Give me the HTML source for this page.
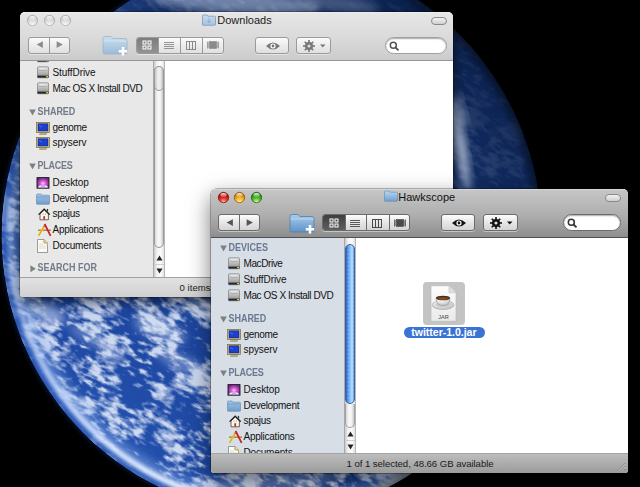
<!DOCTYPE html>
<html><head><meta charset="utf-8"><style>
*{margin:0;padding:0;box-sizing:border-box}
html,body{width:640px;height:487px;overflow:hidden;background:#000;font-family:"Liberation Sans",sans-serif;}
.a{position:absolute}
.win{position:absolute;overflow:hidden}
.t{position:absolute;white-space:nowrap;line-height:1;color:#000}
</style></head>
<body>
<svg class="a" style="left:0;top:0" width="640" height="487" viewBox="0 0 640 487">
<defs>
<clipPath id="cA"><circle cx="281.3" cy="235.5" r="279.5"/></clipPath>
<clipPath id="cB2"><circle cx="257" cy="234.5" r="284.5"/></clipPath>
<clipPath id="cB" clip-path="url(#cA)"><circle cx="257" cy="234.5" r="284.5"/></clipPath>
<radialGradient id="gBase" cx="60" cy="480" r="600" gradientUnits="userSpaceOnUse">
 <stop offset="0" stop-color="#2858b8"/>
 <stop offset="0.3" stop-color="#1c46a0"/>
 <stop offset="0.5" stop-color="#183d88"/>
 <stop offset="0.7" stop-color="#183a80"/>
 <stop offset="0.85" stop-color="#112c62"/>
 <stop offset="1" stop-color="#0b214e"/>
</radialGradient>
<radialGradient id="gShade" cx="257" cy="234.5" r="284.5" gradientUnits="userSpaceOnUse">
 <stop offset="0.96" stop-color="#000" stop-opacity="0"/>
 <stop offset="1" stop-color="#000" stop-opacity="0.45"/>
</radialGradient>
<filter id="fCloud" x="-300" y="-300" width="1300" height="1100" filterUnits="userSpaceOnUse">
 <feTurbulence type="fractalNoise" baseFrequency="0.09 0.2" numOctaves="3" seed="5" result="n1"/>
 <feTurbulence type="fractalNoise" baseFrequency="0.025 0.03" numOctaves="2" seed="21" result="n2"/>
 <feComposite in="n1" in2="n2" operator="arithmetic" k1="0" k2="0.55" k3="0.6" k4="-0.05" result="n"/>
 <feColorMatrix in="n" type="matrix" values="0 0 0 0 0.88  0 0 0 0 0.92  0 0 0 0 1  5.5 0 0 0 -2.25" result="c"/>
 <feGaussianBlur in="c" stdDeviation="0.5" result="cb"/>
 <feComposite in="cb" in2="SourceGraphic" operator="in"/>
</filter>
<radialGradient id="gCloudMask" cx="60" cy="480" r="600" gradientUnits="userSpaceOnUse">
 <stop offset="0" stop-color="#fff" stop-opacity="0.85"/>
 <stop offset="0.45" stop-color="#fff" stop-opacity="0.8"/>
 <stop offset="0.65" stop-color="#fff" stop-opacity="0.5"/>
 <stop offset="0.8" stop-color="#fff" stop-opacity="0.15"/>
 <stop offset="1" stop-color="#fff" stop-opacity="0.04"/>
</radialGradient>
<linearGradient id="gLimb" x1="110" y1="480" x2="10" y2="140" gradientUnits="userSpaceOnUse">
 <stop offset="0" stop-color="#e4eeff" stop-opacity="1"/>
 <stop offset="0.3" stop-color="#d0e0ff" stop-opacity="0.85"/>
 <stop offset="0.7" stop-color="#a8c0f0" stop-opacity="0.4"/>
 <stop offset="1" stop-color="#90a8d8" stop-opacity="0.2"/>
</linearGradient>
<linearGradient id="gHaze" x1="0" y1="487" x2="260" y2="0" gradientUnits="userSpaceOnUse">
 <stop offset="0" stop-color="#9cc0f8" stop-opacity="0.8"/>
 <stop offset="0.6" stop-color="#7aa0e0" stop-opacity="0.55"/>
 <stop offset="1" stop-color="#5a78b0" stop-opacity="0.25"/>
</linearGradient>
<mask id="mCloud" maskUnits="userSpaceOnUse" x="0" y="0" width="640" height="487"><rect width="640" height="487" fill="url(#gCloudMask)"/></mask>
<linearGradient id="gLimbMaskG" x1="150" y1="380" x2="400" y2="130" gradientUnits="userSpaceOnUse"><stop offset="0" stop-color="#fff"/><stop offset="1" stop-color="#000"/></linearGradient>
<mask id="mLimb" maskUnits="userSpaceOnUse" x="0" y="0" width="640" height="487"><rect width="640" height="487" fill="url(#gLimbMaskG)"/></mask>
<filter id="fBlur" x="-10%" y="-10%" width="120%" height="120%"><feGaussianBlur stdDeviation="2"/></filter>
<filter id="fBlur2" x="-10%" y="-10%" width="120%" height="120%"><feGaussianBlur stdDeviation="4"/></filter>
<filter id="fBlur3" x="-50%" y="-50%" width="200%" height="200%"><feGaussianBlur stdDeviation="4"/></filter>
</defs>
<circle cx="281.3" cy="235.5" r="279.8" fill="none" stroke="#1c3c8c" stroke-width="2.2" opacity="0.55" filter="url(#fBlur)" clip-path="url(#cB2)"/>
<g clip-path="url(#cB)">
<rect width="640" height="487" fill="url(#gBase)"/>
<g mask="url(#mCloud)"><g transform="rotate(28 200 400)"><rect x="-300" y="-300" width="1300" height="1100" fill="#fff" filter="url(#fCloud)"/></g></g>
<ellipse cx="45" cy="312" rx="22" ry="9" transform="rotate(25 45 312)" fill="#dfe8fa" opacity="0.55" filter="url(#fBlur3)"/>
<ellipse cx="95" cy="340" rx="30" ry="6" transform="rotate(28 95 340)" fill="#dfe8fa" opacity="0.35" filter="url(#fBlur3)"/>
<ellipse cx="160" cy="330" rx="28" ry="10" transform="rotate(20 160 330)" fill="#dfe8fa" opacity="0.4" filter="url(#fBlur3)"/>
<ellipse cx="180" cy="362" rx="26" ry="8" transform="rotate(25 180 362)" fill="#dfe8fa" opacity="0.35" filter="url(#fBlur3)"/>
<ellipse cx="200" cy="305" rx="16" ry="8" transform="rotate(0 200 305)" fill="#dfe8fa" opacity="0.35" filter="url(#fBlur3)"/>
<ellipse cx="460" cy="145" rx="5" ry="48" transform="rotate(-10 460 145)" fill="#dfe8fa" opacity="0.75" filter="url(#fBlur3)"/>
<ellipse cx="462" cy="110" rx="3" ry="20" transform="rotate(-15 462 110)" fill="#dfe8fa" opacity="0.4" filter="url(#fBlur3)"/>
<ellipse cx="235" cy="2" rx="85" ry="12" transform="rotate(4 235 2)" fill="#dfe8fa" opacity="0.45" filter="url(#fBlur3)"/>
<ellipse cx="340" cy="4" rx="40" ry="8" transform="rotate(8 340 4)" fill="#dfe8fa" opacity="0.25" filter="url(#fBlur3)"/>
<ellipse cx="270" cy="482" rx="70" ry="9" transform="rotate(-5 270 482)" fill="#dfe8fa" opacity="0.3" filter="url(#fBlur3)"/>
<g mask="url(#mLimb)">
<circle cx="281.3" cy="235.5" r="268" fill="none" stroke="url(#gHaze)" stroke-width="18" opacity="0.55" filter="url(#fBlur2)"/>
<circle cx="281.3" cy="235.5" r="271.8" fill="none" stroke="url(#gLimb)" stroke-width="7.5" filter="url(#fBlur)"/>
<circle cx="281.3" cy="235.5" r="277.5" fill="none" stroke="#2a58b8" stroke-width="5" opacity="0.95" filter="url(#fBlur)"/>
</g>
<rect width="640" height="487" fill="url(#gShade)"/>
</g>
</svg>
<div class="a" style="left:20px;top:12px;width:433px;height:284.5px;border-radius:5px 5px 3px 3px;box-shadow:0 5px 14px rgba(0,0,0,0.6), 0 0 0 0.5px rgba(0,0,0,0.45)"></div><div class="win" style="left:20px;top:12px;width:433px;height:284.5px;border-radius:5px 5px 3px 3px;background:#fff"><div class="a" style="left:0;top:0;width:433px;height:49px;background:linear-gradient(#efefef 0px,#e6e6e6 2px,#d9d9d9 28px,#cbcbcb 48px);border-bottom:1px solid #969696"></div><div class="a" style="left:0;top:49px;width:132.5px;height:216.5px;background:#e8e8e8;overflow:hidden"><svg class="a" style="left:8.6px;top:-23.0px" width="7" height="7"><path d="M0.2 0.6H6.8L3.5 6.4Z" fill="#808080"/></svg><div class="t" style="left:17.6px;top:-24.02px;font-size:9px;font-weight:bold;color:#737b88;letter-spacing:-0.03px;transform:scaleY(1.14);transform-origin:0 90%">DEVICES</div><svg class="a" style="left:16.8px;top:-10.899999999999988px" width="12" height="13" viewBox="0 0 12 13"><defs><linearGradient id="dg" x1="0" y1="0" x2="0" y2="1"><stop offset="0" stop-color="#e6e6e6"/><stop offset="0.6" stop-color="#b0b0b0"/><stop offset="1" stop-color="#8a8a8a"/></linearGradient></defs><rect x="0.5" y="0.8" width="11" height="11" rx="1" fill="url(#dg)" stroke="#7a7a7a" stroke-width="0.7"/><path d="M3 3H9" stroke="#fff" stroke-width="0.8" opacity="0.8"/><path d="M2 4.3H10" stroke="#8a8a8a" stroke-width="0.5"/><rect x="0.5" y="9.6" width="11" height="2" fill="#2a2a2a"/><rect x="9.3" y="10" width="1.6" height="1.4" fill="#f4e04a"/></svg><div class="t" style="left:32.5px;top:-8.56px;font-size:10px;font-weight:normal;color:#111;letter-spacing:-0.4px;">MacDrive</div><svg class="a" style="left:16.8px;top:4.850000000000012px" width="12" height="13" viewBox="0 0 12 13"><defs><linearGradient id="dg" x1="0" y1="0" x2="0" y2="1"><stop offset="0" stop-color="#e6e6e6"/><stop offset="0.6" stop-color="#b0b0b0"/><stop offset="1" stop-color="#8a8a8a"/></linearGradient></defs><rect x="0.5" y="0.8" width="11" height="11" rx="1" fill="url(#dg)" stroke="#7a7a7a" stroke-width="0.7"/><path d="M3 3H9" stroke="#fff" stroke-width="0.8" opacity="0.8"/><path d="M2 4.3H10" stroke="#8a8a8a" stroke-width="0.5"/><rect x="0.5" y="9.6" width="11" height="2" fill="#2a2a2a"/><rect x="9.3" y="10" width="1.6" height="1.4" fill="#f4e04a"/></svg><div class="t" style="left:32.5px;top:7.19px;font-size:10px;font-weight:normal;color:#111;letter-spacing:-0.07px;">StuffDrive</div><svg class="a" style="left:16.8px;top:20.600000000000012px" width="12" height="13" viewBox="0 0 12 13"><defs><linearGradient id="dg" x1="0" y1="0" x2="0" y2="1"><stop offset="0" stop-color="#e6e6e6"/><stop offset="0.6" stop-color="#b0b0b0"/><stop offset="1" stop-color="#8a8a8a"/></linearGradient></defs><rect x="0.5" y="0.8" width="11" height="11" rx="1" fill="url(#dg)" stroke="#7a7a7a" stroke-width="0.7"/><path d="M3 3H9" stroke="#fff" stroke-width="0.8" opacity="0.8"/><path d="M2 4.3H10" stroke="#8a8a8a" stroke-width="0.5"/><rect x="0.5" y="9.6" width="11" height="2" fill="#2a2a2a"/><rect x="9.3" y="10" width="1.6" height="1.4" fill="#f4e04a"/></svg><div class="t" style="left:32.5px;top:22.94px;font-size:10px;font-weight:normal;color:#111;letter-spacing:-0.43px;">Mac OS X Install DVD</div><svg class="a" style="left:8.6px;top:47.6px" width="7" height="7"><path d="M0.2 0.6H6.8L3.5 6.4Z" fill="#808080"/></svg><div class="t" style="left:17.6px;top:46.58px;font-size:9px;font-weight:bold;color:#737b88;letter-spacing:-0.06px;transform:scaleY(1.14);transform-origin:0 90%">SHARED</div><svg class="a" style="left:16.0px;top:60.5px" width="14" height="13" viewBox="0 0 14 13"><rect x="0.5" y="0.5" width="13" height="10" fill="#d9cf9a" stroke="#6e6540" stroke-width="0.7"/><rect x="2" y="1.8" width="10" height="7.2" fill="#1d3fd0" stroke="#0a1a60" stroke-width="0.5"/><path d="M3 3.5L6 5" stroke="#6f8fff" stroke-width="0.6"/><rect x="3.5" y="10.8" width="7" height="1.6" fill="#b8ae80" stroke="#6e6540" stroke-width="0.4"/></svg><div class="t" style="left:32.5px;top:61.63px;font-size:10px;font-weight:normal;color:#111;letter-spacing:-0.3px;">genome</div><svg class="a" style="left:16.0px;top:76.25px" width="14" height="13" viewBox="0 0 14 13"><rect x="0.5" y="0.5" width="13" height="10" fill="#d9cf9a" stroke="#6e6540" stroke-width="0.7"/><rect x="2" y="1.8" width="10" height="7.2" fill="#1d3fd0" stroke="#0a1a60" stroke-width="0.5"/><path d="M3 3.5L6 5" stroke="#6f8fff" stroke-width="0.6"/><rect x="3.5" y="10.8" width="7" height="1.6" fill="#b8ae80" stroke="#6e6540" stroke-width="0.4"/></svg><div class="t" style="left:32.5px;top:77.38px;font-size:10px;font-weight:normal;color:#111;letter-spacing:-0.08px;">spyserv</div><svg class="a" style="left:8.6px;top:102.0px" width="7" height="7"><path d="M0.2 0.6H6.8L3.5 6.4Z" fill="#808080"/></svg><div class="t" style="left:17.6px;top:100.98px;font-size:9px;font-weight:bold;color:#737b88;letter-spacing:-0.26px;transform:scaleY(1.14);transform-origin:0 90%">PLACES</div><svg class="a" style="left:16.0px;top:115.79999999999998px" width="14" height="12" viewBox="0 0 14 12"><defs><radialGradient id="dk" cx="0.5" cy="0.55" r="0.6"><stop offset="0" stop-color="#ffd0f4"/><stop offset="0.35" stop-color="#e060d0"/><stop offset="0.75" stop-color="#9030a8"/><stop offset="1" stop-color="#503070"/></radialGradient></defs><rect x="1" y="0.6" width="12" height="10.6" fill="url(#dk)" stroke="#1a1a1a" stroke-width="0.9"/><path d="M1.6 10.6L3.5 8.6H10.5L12.4 10.6Z" fill="#f0f0f8"/><circle cx="6" cy="9.4" r="0.6" fill="#4a8ae0"/><circle cx="8" cy="9.4" r="0.6" fill="#4a8ae0"/></svg><div class="t" style="left:32.5px;top:116.83px;font-size:10px;font-weight:normal;color:#111;letter-spacing:-0.05px;">Desktop</div><svg class="a" style="left:16.0px;top:131.79999999999998px" width="14" height="12" viewBox="0 0 14 12"><defs><linearGradient id="fd" x1="0" y1="0" x2="0" y2="1"><stop offset="0" stop-color="#a4c4e4"/><stop offset="1" stop-color="#6e9ccb"/></linearGradient></defs><path d="M0.5 2 Q0.5 1 1.5 1 L5 1 L6 2.2 L12.5 2.2 Q13.5 2.2 13.5 3.2 L13.5 10.5 Q13.5 11.3 12.7 11.3 L1.3 11.3 Q0.5 11.3 0.5 10.5 Z" fill="url(#fd)" stroke="#5d88b5" stroke-width="0.6"/><path d="M0.8 4H13.2" stroke="#5d88b5" stroke-width="0.5"/></svg><div class="t" style="left:32.5px;top:132.53px;font-size:10px;font-weight:normal;color:#111;letter-spacing:-0.3px;">Development</div><svg class="a" style="left:17.0px;top:146.8px" width="14" height="13" viewBox="0 0 14 13"><path d="M3 6V11.8H11.4V6L7.2 2Z" fill="#faf6ee" stroke="#444" stroke-width="0.8"/><path d="M1.6 6.6L7.2 1.1L12.8 6.6" fill="none" stroke="#1a1a1a" stroke-width="1.3"/><rect x="9.9" y="0.9" width="1.2" height="2.6" fill="#333"/><rect x="6.3" y="8.2" width="1.8" height="3.4" fill="#d03010"/><rect x="5.6" y="5.6" width="0.9" height="0.9" fill="#777"/><rect x="7.9" y="5.6" width="0.9" height="0.9" fill="#777"/></svg><div class="t" style="left:32.5px;top:148.24px;font-size:10px;font-weight:normal;color:#111;letter-spacing:-0.26px;">spajus</div><svg class="a" style="left:16.5px;top:162.4px" width="15" height="14" viewBox="0 0 15 14"><path d="M1 7.2H14" stroke="#b08850" stroke-width="1.6"/><path d="M7.6 1L13.6 12.8" stroke="#c8202a" stroke-width="1.7"/><path d="M7.2 3.2L1.6 12.8" stroke="#e8d030" stroke-width="2"/><path d="M7.2 3.2L1.6 12.8" stroke="#9a7a10" stroke-width="0.4"/><circle cx="7.3" cy="2.9" r="0.9" fill="#e04040"/></svg><div class="t" style="left:32.5px;top:163.94px;font-size:10px;font-weight:normal;color:#111;letter-spacing:-0.24px;">Applications</div><svg class="a" style="left:16.2px;top:178.3px" width="13" height="14" viewBox="0 0 13 14"><path d="M1.5 0.5H8L11.5 4V13.5H1.5Z" fill="#fbfbf4" stroke="#777" stroke-width="0.7"/><path d="M8 0.5V4H11.5" fill="#e0dcc0" stroke="#777" stroke-width="0.6"/><path d="M3 5H7M3 7H10M3 9H10" stroke="#bbb" stroke-width="0.5"/><path d="M7 2 L12 5" stroke="#d8c060" stroke-width="1.2"/></svg><div class="t" style="left:32.5px;top:179.63px;font-size:10px;font-weight:normal;color:#111;letter-spacing:-0.18px;">Documents</div><svg class="a" style="left:9.6px;top:203.6px" width="7" height="8"><path d="M0.4 0.3V7.3L5.8 3.8Z" fill="#808080"/></svg><div class="t" style="left:17.6px;top:203.18px;font-size:9px;font-weight:bold;color:#737b88;letter-spacing:0.0px;transform:scaleY(1.14);transform-origin:0 90%">SEARCH FOR</div></div><div class="a" style="left:132.5px;top:49px;width:12.5px;height:216px;background:linear-gradient(90deg,#c8c8c8,#f4f4f4 30%,#fcfcfc 70%,#e0e0e0);border-left:1px solid #a8a8a8;border-right:1px solid #b8b8b8"></div><div class="a" style="left:134.0px;top:54px;width:9.5px;height:182px;border-radius:5px;border:1px solid #9a9a9a;background:linear-gradient(90deg,#d8d8d8,#fafafa 40%,#f0f0f0 70%,#c8c8c8)"></div><div class="a" style="left:134.0px;top:54px;width:9.5px;height:25px;border-radius:5px;border:1px solid #9a9a9a;background:linear-gradient(90deg,#c8c8c8,#f0f0f0 40%,#e8e8e8 70%,#b8b8b8)"></div><svg class="a" style="left:135.5px;top:243px" width="7" height="6"><path d="M0.5 5.5H6.5L3.5 0.5Z" fill="#222"/></svg><div class="a" style="left:133.5px;top:251.5px;width:10.5px;height:1px;background:#d0d0d0"></div><svg class="a" style="left:135.5px;top:256px" width="7" height="6"><path d="M0.5 0.5H6.5L3.5 5.5Z" fill="#222"/></svg><div class="a" style="left:0;top:264.5px;width:433px;height:20px;background:linear-gradient(#e2e2e2,#d0d0d0);border-top:1px solid #a0a0a0"></div><div class="t" style="left:159.6px;top:271.07px;font-size:9.6px;font-weight:normal;color:#222;letter-spacing:0px;">0 items</div><svg class="a" style="left:6.10px;top:1.80px" width="13" height="13" viewBox="0 0 13 13"><defs><radialGradient id="tl00" cx="0.5" cy="0.95" r="0.75"><stop offset="0" stop-color="#fafafa"/><stop offset="0.6" stop-color="#dedede"/><stop offset="1" stop-color="#c4c4c4"/></radialGradient><linearGradient id="tl00h" x1="0" y1="0" x2="0" y2="1"><stop offset="0" stop-color="#fff" stop-opacity="0.9"/><stop offset="1" stop-color="#fff" stop-opacity="0.1"/></linearGradient></defs><circle cx="6.5" cy="6.5" r="5.2" fill="url(#tl00)" stroke="#a8a8a8" stroke-width="0.7"/><ellipse cx="6.5" cy="4.1" rx="3.2" ry="2.1" fill="url(#tl00h)"/></svg><svg class="a" style="left:22.75px;top:1.80px" width="13" height="13" viewBox="0 0 13 13"><defs><radialGradient id="tl01" cx="0.5" cy="0.95" r="0.75"><stop offset="0" stop-color="#fafafa"/><stop offset="0.6" stop-color="#dedede"/><stop offset="1" stop-color="#c4c4c4"/></radialGradient><linearGradient id="tl01h" x1="0" y1="0" x2="0" y2="1"><stop offset="0" stop-color="#fff" stop-opacity="0.9"/><stop offset="1" stop-color="#fff" stop-opacity="0.1"/></linearGradient></defs><circle cx="6.5" cy="6.5" r="5.2" fill="url(#tl01)" stroke="#a8a8a8" stroke-width="0.7"/><ellipse cx="6.5" cy="4.1" rx="3.2" ry="2.1" fill="url(#tl01h)"/></svg><svg class="a" style="left:39.40px;top:1.80px" width="13" height="13" viewBox="0 0 13 13"><defs><radialGradient id="tl02" cx="0.5" cy="0.95" r="0.75"><stop offset="0" stop-color="#fafafa"/><stop offset="0.6" stop-color="#dedede"/><stop offset="1" stop-color="#c4c4c4"/></radialGradient><linearGradient id="tl02h" x1="0" y1="0" x2="0" y2="1"><stop offset="0" stop-color="#fff" stop-opacity="0.9"/><stop offset="1" stop-color="#fff" stop-opacity="0.1"/></linearGradient></defs><circle cx="6.5" cy="6.5" r="5.2" fill="url(#tl02)" stroke="#a8a8a8" stroke-width="0.7"/><ellipse cx="6.5" cy="4.1" rx="3.2" ry="2.1" fill="url(#tl02h)"/></svg><div class="a" style="left:411px;top:5px;width:16px;height:8px;border:1px solid #8a8a8a;border-radius:4px;background:linear-gradient(#f2f2f2,#cfcfcf)"></div><div class="a" style="left:8.399999999999999px;top:24.5px;width:41.5px;height:17.2px;border:1px solid #9a9a9a;border-radius:3px;background:linear-gradient(#fbfbfb,#ececec 50%,#e0e0e0);box-shadow:0 1px 0 rgba(255,255,255,0.45)"><div class="a" style="left:19.3px;top:0;width:1px;height:15.2px;background:#9a9a9a"></div><svg class="a" style="left:6.2px;top:3.8px" width="8" height="8"><path d="M0.6 3.6 L6.9 0.3 L6.9 6.9 Z" fill="#8c8c8c"/></svg><svg class="a" style="left:26.6px;top:3.8px" width="8" height="8"><path d="M6.9 3.6 L0.6 0.3 L0.6 6.9 Z" fill="#8c8c8c"/></svg></div><svg class="a" style="left:82px;top:22px" width="27" height="22" viewBox="0 0 27 22"><defs><linearGradient id="nf0" x1="0" y1="0" x2="0" y2="1"><stop offset="0" stop-color="#c9dff0"/><stop offset="1" stop-color="#9dbad6"/></linearGradient></defs><path d="M1 4.5 Q1 2.5 3 2.5 L9 2.5 L11 4.5 L23 4.5 Q25 4.5 25 6.5 L25 18.5 Q25 20 23.5 20 L2.5 20 Q1 20 1 18.5 Z" fill="url(#nf0)" stroke="#9ab3cc" stroke-width="0.8"/><path d="M1.3 7 L24.7 7" stroke="#fff" stroke-opacity="0.5" stroke-width="0.8"/><path d="M21 13 L21 21.5 M16.8 17.2 L25.2 17.2" stroke="#fff" stroke-width="2.6"/><path d="M21 13.6 L21 20.9 M17.4 17.2 L24.6 17.2" stroke="#9dbad6" stroke-width="0" /></svg><div class="a" style="left:115.5px;top:24.700000000000003px;width:88px;height:17px;border:1px solid #9a9a9a;border-radius:3px;background:linear-gradient(#fbfbfb,#ececec 50%,#e0e0e0);box-shadow:0 1px 0 rgba(255,255,255,0.45)"><div class="a" style="left:0;top:0;width:21.5px;height:15px;background:linear-gradient(#7c7c7c,#929292);border-radius:2px 0 0 2px"></div><div class="a" style="left:21.5px;top:0;width:1px;height:15px;background:#9a9a9a"></div><div class="a" style="left:43.8px;top:0;width:1px;height:15px;background:#9a9a9a"></div><div class="a" style="left:65.8px;top:0;width:1px;height:15px;background:#9a9a9a"></div><svg class="a" style="left:5.8px;top:2.5px" width="10" height="10"><rect x="1" y="1" width="3" height="3" fill="none" stroke="#fff" stroke-width="1"/><rect x="6" y="1" width="3" height="3" fill="none" stroke="#fff"/><rect x="1" y="6" width="3" height="3" fill="none" stroke="#fff"/><rect x="6" y="6" width="3" height="3" fill="none" stroke="#fff"/></svg><svg class="a" style="left:26.6px;top:2.5px" width="12" height="10"><path d="M1 2.5H11M1 4.5H11M1 6.5H11M1 8.5H11" stroke="#8a8a8a" stroke-width="0.9"/></svg><svg class="a" style="left:48.8px;top:2.5px" width="12" height="10"><rect x="1.5" y="1.5" width="9" height="8" fill="none" stroke="#8a8a8a" stroke-width="1"/><path d="M4.5 1.5V9.5M7.5 1.5V9.5" stroke="#8a8a8a" stroke-width="1"/></svg><svg class="a" style="left:69.9px;top:2.5px" width="14" height="10"><rect x="4" y="2" width="6" height="6" fill="#8a8a8a"/><path d="M1.5 1.5V8.5M2.8 2V8M11.2 2V8M12.5 1.5V8.5" stroke="#8a8a8a" stroke-width="0.8"/><rect x="3.5" y="1.5" width="7" height="7" fill="none" stroke="#8a8a8a" stroke-width="0.8"/></svg></div><div class="a" style="left:235px;top:25px;width:34px;height:17px;border:1px solid #9a9a9a;border-radius:3px;background:linear-gradient(#fbfbfb,#ececec 50%,#e0e0e0);box-shadow:0 1px 0 rgba(255,255,255,0.45)"><svg class="a" style="left:9px;top:3px" width="16" height="10" viewBox="0 0 16 10"><path d="M1 5 Q8 -2 15 5 Q8 12 1 5 Z" fill="#777"/><circle cx="8" cy="5" r="2.6" fill="#fff"/><circle cx="8" cy="5" r="1.4" fill="#777"/></svg></div><div class="a" style="left:276px;top:25px;width:35px;height:17px;border:1px solid #9a9a9a;border-radius:3px;background:linear-gradient(#fbfbfb,#ececec 50%,#e0e0e0);box-shadow:0 1px 0 rgba(255,255,255,0.45)"><svg class="a" style="left:6px;top:2px" width="12" height="12" viewBox="0 0 12 12"><rect x="5.2" y="0" width="1.6" height="12" fill="#777" transform="rotate(0 6 6)"/><rect x="5.2" y="0" width="1.6" height="12" fill="#777" transform="rotate(45 6 6)"/><rect x="5.2" y="0" width="1.6" height="12" fill="#777" transform="rotate(90 6 6)"/><rect x="5.2" y="0" width="1.6" height="12" fill="#777" transform="rotate(135 6 6)"/><circle cx="6" cy="6" r="4" fill="#777"/><circle cx="6" cy="6" r="1.6" fill="#ddd"/></svg><svg class="a" style="left:23px;top:6px" width="6" height="4"><path d="M0 0.5H5.5L2.75 3.5Z" fill="#777"/></svg></div><div class="a" style="left:364.5px;top:25.1px;width:62px;height:16.8px;border:1px solid #a0a0a0;border-radius:8.4px;background:#fff;box-shadow:inset 0 1px 1.5px rgba(0,0,0,0.35)"><svg class="a" style="left:3px;top:2.5px" width="11" height="10" viewBox="0 0 11 10"><circle cx="4.3" cy="4.3" r="3" fill="none" stroke="#555" stroke-width="1.5"/><path d="M6.5 6.5 L9.5 9.3" stroke="#555" stroke-width="1.8"/></svg></div><svg class="a" style="left:182px;top:1.5px" width="14" height="12" viewBox="0 0 14 12"><defs><linearGradient id="tf0" x1="0" y1="0" x2="0" y2="1"><stop offset="0" stop-color="#c6dcef"/><stop offset="1" stop-color="#a7c3dd"/></linearGradient></defs><path d="M0.5 2 Q0.5 1 1.5 1 L5 1 L6 2.2 L12.5 2.2 Q13.5 2.2 13.5 3.2 L13.5 10.5 Q13.5 11.3 12.7 11.3 L1.3 11.3 Q0.5 11.3 0.5 10.5 Z" fill="url(#tf0)" stroke="#5d88b5" stroke-width="0.6"/><path d="M7 4.5V8.5M5.3 7L7 8.7L8.7 7" stroke="#7fa3c6" stroke-width="0.9" fill="none"/></svg><div class="t" style="left:197.3px;top:2.59px;font-size:11px;font-weight:normal;color:#222;letter-spacing:0px;">Downloads</div></div>
<div class="a" style="left:211px;top:189px;width:417px;height:284px;border-radius:5px 5px 3px 3px;box-shadow:0 8px 22px rgba(0,0,0,0.55), 0 0 0 0.5px rgba(0,0,0,0.5)"></div><div class="win" style="left:211px;top:189px;width:417px;height:284px;border-radius:5px 5px 3px 3px;background:#fff"><div class="a" style="left:0;top:0;width:417px;height:49px;background:linear-gradient(#e6e6e6 0px,#c6c6c6 1px,#acacac 28px,#8e8e8e 48px);border-bottom:1px solid #505050"></div><div class="a" style="left:0;top:49px;width:132.5px;height:216px;background:#d7dee6;overflow:hidden"><svg class="a" style="left:8.6px;top:7.0px" width="7" height="7"><path d="M0.2 0.6H6.8L3.5 6.4Z" fill="#808080"/></svg><div class="t" style="left:17.6px;top:5.98px;font-size:9px;font-weight:bold;color:#6a7890;letter-spacing:-0.03px;transform:scaleY(1.14);transform-origin:0 90%">DEVICES</div><svg class="a" style="left:16.8px;top:19.100000000000012px" width="12" height="13" viewBox="0 0 12 13"><defs><linearGradient id="dg" x1="0" y1="0" x2="0" y2="1"><stop offset="0" stop-color="#e6e6e6"/><stop offset="0.6" stop-color="#b0b0b0"/><stop offset="1" stop-color="#8a8a8a"/></linearGradient></defs><rect x="0.5" y="0.8" width="11" height="11" rx="1" fill="url(#dg)" stroke="#7a7a7a" stroke-width="0.7"/><path d="M3 3H9" stroke="#fff" stroke-width="0.8" opacity="0.8"/><path d="M2 4.3H10" stroke="#8a8a8a" stroke-width="0.5"/><rect x="0.5" y="9.6" width="11" height="2" fill="#2a2a2a"/><rect x="9.3" y="10" width="1.6" height="1.4" fill="#f4e04a"/></svg><div class="t" style="left:32.5px;top:21.44px;font-size:10px;font-weight:normal;color:#111;letter-spacing:-0.4px;">MacDrive</div><svg class="a" style="left:16.8px;top:34.85000000000001px" width="12" height="13" viewBox="0 0 12 13"><defs><linearGradient id="dg" x1="0" y1="0" x2="0" y2="1"><stop offset="0" stop-color="#e6e6e6"/><stop offset="0.6" stop-color="#b0b0b0"/><stop offset="1" stop-color="#8a8a8a"/></linearGradient></defs><rect x="0.5" y="0.8" width="11" height="11" rx="1" fill="url(#dg)" stroke="#7a7a7a" stroke-width="0.7"/><path d="M3 3H9" stroke="#fff" stroke-width="0.8" opacity="0.8"/><path d="M2 4.3H10" stroke="#8a8a8a" stroke-width="0.5"/><rect x="0.5" y="9.6" width="11" height="2" fill="#2a2a2a"/><rect x="9.3" y="10" width="1.6" height="1.4" fill="#f4e04a"/></svg><div class="t" style="left:32.5px;top:37.19px;font-size:10px;font-weight:normal;color:#111;letter-spacing:-0.07px;">StuffDrive</div><svg class="a" style="left:16.8px;top:50.60000000000001px" width="12" height="13" viewBox="0 0 12 13"><defs><linearGradient id="dg" x1="0" y1="0" x2="0" y2="1"><stop offset="0" stop-color="#e6e6e6"/><stop offset="0.6" stop-color="#b0b0b0"/><stop offset="1" stop-color="#8a8a8a"/></linearGradient></defs><rect x="0.5" y="0.8" width="11" height="11" rx="1" fill="url(#dg)" stroke="#7a7a7a" stroke-width="0.7"/><path d="M3 3H9" stroke="#fff" stroke-width="0.8" opacity="0.8"/><path d="M2 4.3H10" stroke="#8a8a8a" stroke-width="0.5"/><rect x="0.5" y="9.6" width="11" height="2" fill="#2a2a2a"/><rect x="9.3" y="10" width="1.6" height="1.4" fill="#f4e04a"/></svg><div class="t" style="left:32.5px;top:52.94px;font-size:10px;font-weight:normal;color:#111;letter-spacing:-0.43px;">Mac OS X Install DVD</div><svg class="a" style="left:8.6px;top:77.6px" width="7" height="7"><path d="M0.2 0.6H6.8L3.5 6.4Z" fill="#808080"/></svg><div class="t" style="left:17.6px;top:76.58px;font-size:9px;font-weight:bold;color:#6a7890;letter-spacing:-0.06px;transform:scaleY(1.14);transform-origin:0 90%">SHARED</div><svg class="a" style="left:16.0px;top:90.5px" width="14" height="13" viewBox="0 0 14 13"><rect x="0.5" y="0.5" width="13" height="10" fill="#d9cf9a" stroke="#6e6540" stroke-width="0.7"/><rect x="2" y="1.8" width="10" height="7.2" fill="#1d3fd0" stroke="#0a1a60" stroke-width="0.5"/><path d="M3 3.5L6 5" stroke="#6f8fff" stroke-width="0.6"/><rect x="3.5" y="10.8" width="7" height="1.6" fill="#b8ae80" stroke="#6e6540" stroke-width="0.4"/></svg><div class="t" style="left:32.5px;top:91.63px;font-size:10px;font-weight:normal;color:#111;letter-spacing:-0.3px;">genome</div><svg class="a" style="left:16.0px;top:106.25px" width="14" height="13" viewBox="0 0 14 13"><rect x="0.5" y="0.5" width="13" height="10" fill="#d9cf9a" stroke="#6e6540" stroke-width="0.7"/><rect x="2" y="1.8" width="10" height="7.2" fill="#1d3fd0" stroke="#0a1a60" stroke-width="0.5"/><path d="M3 3.5L6 5" stroke="#6f8fff" stroke-width="0.6"/><rect x="3.5" y="10.8" width="7" height="1.6" fill="#b8ae80" stroke="#6e6540" stroke-width="0.4"/></svg><div class="t" style="left:32.5px;top:107.38px;font-size:10px;font-weight:normal;color:#111;letter-spacing:-0.08px;">spyserv</div><svg class="a" style="left:8.6px;top:132.0px" width="7" height="7"><path d="M0.2 0.6H6.8L3.5 6.4Z" fill="#808080"/></svg><div class="t" style="left:17.6px;top:130.98px;font-size:9px;font-weight:bold;color:#6a7890;letter-spacing:-0.26px;transform:scaleY(1.14);transform-origin:0 90%">PLACES</div><svg class="a" style="left:16.0px;top:145.79999999999998px" width="14" height="12" viewBox="0 0 14 12"><defs><radialGradient id="dk" cx="0.5" cy="0.55" r="0.6"><stop offset="0" stop-color="#ffd0f4"/><stop offset="0.35" stop-color="#e060d0"/><stop offset="0.75" stop-color="#9030a8"/><stop offset="1" stop-color="#503070"/></radialGradient></defs><rect x="1" y="0.6" width="12" height="10.6" fill="url(#dk)" stroke="#1a1a1a" stroke-width="0.9"/><path d="M1.6 10.6L3.5 8.6H10.5L12.4 10.6Z" fill="#f0f0f8"/><circle cx="6" cy="9.4" r="0.6" fill="#4a8ae0"/><circle cx="8" cy="9.4" r="0.6" fill="#4a8ae0"/></svg><div class="t" style="left:32.5px;top:146.83px;font-size:10px;font-weight:normal;color:#111;letter-spacing:-0.05px;">Desktop</div><svg class="a" style="left:16.0px;top:161.79999999999998px" width="14" height="12" viewBox="0 0 14 12"><defs><linearGradient id="fd" x1="0" y1="0" x2="0" y2="1"><stop offset="0" stop-color="#a4c4e4"/><stop offset="1" stop-color="#6e9ccb"/></linearGradient></defs><path d="M0.5 2 Q0.5 1 1.5 1 L5 1 L6 2.2 L12.5 2.2 Q13.5 2.2 13.5 3.2 L13.5 10.5 Q13.5 11.3 12.7 11.3 L1.3 11.3 Q0.5 11.3 0.5 10.5 Z" fill="url(#fd)" stroke="#5d88b5" stroke-width="0.6"/><path d="M0.8 4H13.2" stroke="#5d88b5" stroke-width="0.5"/></svg><div class="t" style="left:32.5px;top:162.53px;font-size:10px;font-weight:normal;color:#111;letter-spacing:-0.3px;">Development</div><svg class="a" style="left:17.0px;top:176.8px" width="14" height="13" viewBox="0 0 14 13"><path d="M3 6V11.8H11.4V6L7.2 2Z" fill="#faf6ee" stroke="#444" stroke-width="0.8"/><path d="M1.6 6.6L7.2 1.1L12.8 6.6" fill="none" stroke="#1a1a1a" stroke-width="1.3"/><rect x="9.9" y="0.9" width="1.2" height="2.6" fill="#333"/><rect x="6.3" y="8.2" width="1.8" height="3.4" fill="#d03010"/><rect x="5.6" y="5.6" width="0.9" height="0.9" fill="#777"/><rect x="7.9" y="5.6" width="0.9" height="0.9" fill="#777"/></svg><div class="t" style="left:32.5px;top:178.24px;font-size:10px;font-weight:normal;color:#111;letter-spacing:-0.26px;">spajus</div><svg class="a" style="left:16.5px;top:192.4px" width="15" height="14" viewBox="0 0 15 14"><path d="M1 7.2H14" stroke="#b08850" stroke-width="1.6"/><path d="M7.6 1L13.6 12.8" stroke="#c8202a" stroke-width="1.7"/><path d="M7.2 3.2L1.6 12.8" stroke="#e8d030" stroke-width="2"/><path d="M7.2 3.2L1.6 12.8" stroke="#9a7a10" stroke-width="0.4"/><circle cx="7.3" cy="2.9" r="0.9" fill="#e04040"/></svg><div class="t" style="left:32.5px;top:193.94px;font-size:10px;font-weight:normal;color:#111;letter-spacing:-0.24px;">Applications</div><svg class="a" style="left:16.2px;top:208.3px" width="13" height="14" viewBox="0 0 13 14"><path d="M1.5 0.5H8L11.5 4V13.5H1.5Z" fill="#fbfbf4" stroke="#777" stroke-width="0.7"/><path d="M8 0.5V4H11.5" fill="#e0dcc0" stroke="#777" stroke-width="0.6"/><path d="M3 5H7M3 7H10M3 9H10" stroke="#bbb" stroke-width="0.5"/><path d="M7 2 L12 5" stroke="#d8c060" stroke-width="1.2"/></svg><div class="t" style="left:32.5px;top:209.63px;font-size:10px;font-weight:normal;color:#111;letter-spacing:-0.18px;">Documents</div></div><div class="a" style="left:132.5px;top:49px;width:12.5px;height:215px;background:linear-gradient(90deg,#c8c8c8,#f4f4f4 30%,#fcfcfc 70%,#e0e0e0);border-left:1px solid #a8a8a8;border-right:1px solid #b8b8b8"></div><div class="a" style="left:133.5px;top:54.5px;width:10.5px;height:160.5px;border-radius:5.5px;border:1px solid #3b5fa8;background:repeating-linear-gradient(180deg,rgba(255,255,255,0.07) 0 2px,rgba(255,255,255,0) 2px 4px),linear-gradient(90deg,#2555c0,#5a98ec 25%,#8cc4fa 55%,#b0e0ff 78%,#5a90d8)"></div><div class="a" style="left:134.0px;top:215px;width:9.5px;height:24px;border-radius:0 0 5px 5px;border:1px solid #a0a0a0;border-top:none;background:linear-gradient(90deg,#d8d8d8,#fafafa 40%,#f0f0f0 70%,#c8c8c8)"></div><svg class="a" style="left:135.5px;top:242px" width="7" height="6"><path d="M0.5 5.5H6.5L3.5 0.5Z" fill="#222"/></svg><div class="a" style="left:133.5px;top:250.5px;width:10.5px;height:1px;background:#d0d0d0"></div><svg class="a" style="left:135.5px;top:255px" width="7" height="6"><path d="M0.5 0.5H6.5L3.5 5.5Z" fill="#222"/></svg><div class="a" style="left:211.7px;top:93px;width:42.5px;height:42.5px;border-radius:4px;background:#c4c4c4"></div><svg class="a" style="left:219px;top:95.5px" width="27" height="37" viewBox="0 0 27 37"><defs><linearGradient id="pg" x1="0" y1="0" x2="0" y2="1"><stop offset="0" stop-color="#fdfdfd"/><stop offset="1" stop-color="#eaeaea"/></linearGradient><radialGradient id="cupg" cx="0.4" cy="0.3" r="0.8"><stop offset="0" stop-color="#fff"/><stop offset="1" stop-color="#b8b8b8"/></radialGradient></defs><path d="M1 0.8H19L26 7.8V36.3H1Z" fill="url(#pg)" stroke="#b5b5b5" stroke-width="0.6"/><path d="M19 0.8V7.8H26" fill="#dedede" stroke="#c0c0c0" stroke-width="0.6"/><ellipse cx="13" cy="20" rx="11" ry="4.5" fill="url(#cupg)" stroke="#9a9a9a" stroke-width="0.5"/><ellipse cx="13" cy="19.5" rx="7.5" ry="2.5" fill="#c8c8c8"/><path d="M6 13 Q6 20.5 13 20.5 Q20 20.5 20 13 Z" fill="url(#cupg)" stroke="#8a8a8a" stroke-width="0.5"/><ellipse cx="13" cy="13" rx="7" ry="2.3" fill="#4a2a10"/><ellipse cx="13" cy="13.4" rx="5.5" ry="1.5" fill="#7a4a20"/><text x="13.5" y="33.5" font-family="Liberation Sans" font-size="5.6" text-anchor="middle" fill="#444">JAR</text></svg><div class="a" style="left:192.8px;top:137.7px;width:81px;height:11.5px;border-radius:6px;background:#3b73d4"></div><div class="t" style="left:200.3px;top:138.33px;font-size:10.6px;font-weight:bold;color:#fff;letter-spacing:-0.05px;">twitter-1.0.jar</div><div class="a" style="left:0;top:264px;width:417px;height:20px;background:linear-gradient(#bdbdbd,#9b9b9b);border-top:1px solid #a3a3a3"></div><div class="t" style="left:135.5px;top:269.57px;font-size:9.6px;font-weight:normal;color:#1a1a1a;letter-spacing:-0.05px;">1 of 1 selected, 48.66 GB available</div><svg class="a" style="left:404px;top:271px" width="11" height="11"><path d="M10.5 3L3 10.5M10.5 6L6 10.5M10.5 9L9 10.5" stroke="#777" stroke-width="0.8"/><path d="M10.5 4L4 10.5M10.5 7L7 10.5" stroke="#d8d8d8" stroke-width="0.6"/></svg><svg class="a" style="left:5.60px;top:2.30px" width="13" height="13" viewBox="0 0 13 13"><defs><radialGradient id="tl10" cx="0.5" cy="0.95" r="0.75"><stop offset="0" stop-color="#ffb0a8"/><stop offset="0.6" stop-color="#e0281c"/><stop offset="1" stop-color="#a01208"/></radialGradient><linearGradient id="tl10h" x1="0" y1="0" x2="0" y2="1"><stop offset="0" stop-color="#fff" stop-opacity="0.9"/><stop offset="1" stop-color="#fff" stop-opacity="0.1"/></linearGradient></defs><circle cx="6.5" cy="6.5" r="5.2" fill="url(#tl10)" stroke="#7a0a04" stroke-width="0.7"/><ellipse cx="6.5" cy="4.1" rx="3.2" ry="2.1" fill="url(#tl10h)"/></svg><svg class="a" style="left:22.25px;top:2.30px" width="13" height="13" viewBox="0 0 13 13"><defs><radialGradient id="tl11" cx="0.5" cy="0.95" r="0.75"><stop offset="0" stop-color="#fff0a0"/><stop offset="0.6" stop-color="#f4b020"/><stop offset="1" stop-color="#c07008"/></radialGradient><linearGradient id="tl11h" x1="0" y1="0" x2="0" y2="1"><stop offset="0" stop-color="#fff" stop-opacity="0.9"/><stop offset="1" stop-color="#fff" stop-opacity="0.1"/></linearGradient></defs><circle cx="6.5" cy="6.5" r="5.2" fill="url(#tl11)" stroke="#8a5004" stroke-width="0.7"/><ellipse cx="6.5" cy="4.1" rx="3.2" ry="2.1" fill="url(#tl11h)"/></svg><svg class="a" style="left:38.90px;top:2.30px" width="13" height="13" viewBox="0 0 13 13"><defs><radialGradient id="tl12" cx="0.5" cy="0.95" r="0.75"><stop offset="0" stop-color="#d8ffa8"/><stop offset="0.6" stop-color="#48b828"/><stop offset="1" stop-color="#248a14"/></radialGradient><linearGradient id="tl12h" x1="0" y1="0" x2="0" y2="1"><stop offset="0" stop-color="#fff" stop-opacity="0.9"/><stop offset="1" stop-color="#fff" stop-opacity="0.1"/></linearGradient></defs><circle cx="6.5" cy="6.5" r="5.2" fill="url(#tl12)" stroke="#1a5a0a" stroke-width="0.7"/><ellipse cx="6.5" cy="4.1" rx="3.2" ry="2.1" fill="url(#tl12h)"/></svg><div class="a" style="left:394px;top:5px;width:16px;height:8px;border:1px solid #8a8a8a;border-radius:4px;background:linear-gradient(#f2f2f2,#cfcfcf)"></div><div class="a" style="left:7.400000000000006px;top:24.80000000000001px;width:41.5px;height:17.2px;border:1px solid #6b6b6b;border-radius:3px;background:linear-gradient(#fdfdfd,#e6e6e6 50%,#d4d4d4);box-shadow:0 1px 0 rgba(255,255,255,0.45)"><div class="a" style="left:19.3px;top:0;width:1px;height:15.2px;background:#6b6b6b"></div><svg class="a" style="left:6.2px;top:3.8px" width="8" height="8"><path d="M0.6 3.6 L6.9 0.3 L6.9 6.9 Z" fill="#555"/></svg><svg class="a" style="left:26.6px;top:3.8px" width="8" height="8"><path d="M6.9 3.6 L0.6 0.3 L0.6 6.9 Z" fill="#555"/></svg></div><svg class="a" style="left:78px;top:22.5px" width="27" height="22" viewBox="0 0 27 22"><defs><linearGradient id="nf1" x1="0" y1="0" x2="0" y2="1"><stop offset="0" stop-color="#a9cdec"/><stop offset="1" stop-color="#5f93c8"/></linearGradient></defs><path d="M1 4.5 Q1 2.5 3 2.5 L9 2.5 L11 4.5 L23 4.5 Q25 4.5 25 6.5 L25 18.5 Q25 20 23.5 20 L2.5 20 Q1 20 1 18.5 Z" fill="url(#nf1)" stroke="#4f7fb0" stroke-width="0.8"/><path d="M1.3 7 L24.7 7" stroke="#fff" stroke-opacity="0.5" stroke-width="0.8"/><path d="M21 13 L21 21.5 M16.8 17.2 L25.2 17.2" stroke="#fff" stroke-width="2.6"/><path d="M21 13.6 L21 20.9 M17.4 17.2 L24.6 17.2" stroke="#5f93c8" stroke-width="0" /></svg><div class="a" style="left:111.19999999999999px;top:25.099999999999994px;width:88px;height:17px;border:1px solid #6b6b6b;border-radius:3px;background:linear-gradient(#fdfdfd,#e6e6e6 50%,#d4d4d4);box-shadow:0 1px 0 rgba(255,255,255,0.45)"><div class="a" style="left:0;top:0;width:21.5px;height:15px;background:linear-gradient(#3e3e3e,#5e5e5e);border-radius:2px 0 0 2px"></div><div class="a" style="left:21.5px;top:0;width:1px;height:15px;background:#6b6b6b"></div><div class="a" style="left:43px;top:0;width:1px;height:15px;background:#6b6b6b"></div><div class="a" style="left:65.4px;top:0;width:1px;height:15px;background:#6b6b6b"></div><svg class="a" style="left:5.8px;top:2.5px" width="10" height="10"><rect x="1" y="1" width="3" height="3" fill="none" stroke="#fff" stroke-width="1"/><rect x="6" y="1" width="3" height="3" fill="none" stroke="#fff"/><rect x="1" y="6" width="3" height="3" fill="none" stroke="#fff"/><rect x="6" y="6" width="3" height="3" fill="none" stroke="#fff"/></svg><svg class="a" style="left:26.2px;top:2.5px" width="12" height="10"><path d="M1 2.5H11M1 4.5H11M1 6.5H11M1 8.5H11" stroke="#4a4a4a" stroke-width="0.9"/></svg><svg class="a" style="left:48.2px;top:2.5px" width="12" height="10"><rect x="1.5" y="1.5" width="9" height="8" fill="none" stroke="#4a4a4a" stroke-width="1"/><path d="M4.5 1.5V9.5M7.5 1.5V9.5" stroke="#4a4a4a" stroke-width="1"/></svg><svg class="a" style="left:69.7px;top:2.5px" width="14" height="10"><rect x="4" y="2" width="6" height="6" fill="#4a4a4a"/><path d="M1.5 1.5V8.5M2.8 2V8M11.2 2V8M12.5 1.5V8.5" stroke="#4a4a4a" stroke-width="0.8"/><rect x="3.5" y="1.5" width="7" height="7" fill="none" stroke="#4a4a4a" stroke-width="0.8"/></svg></div><div class="a" style="left:230.3px;top:25.19999999999999px;width:34px;height:17px;border:1px solid #6b6b6b;border-radius:3px;background:linear-gradient(#fdfdfd,#e6e6e6 50%,#d4d4d4);box-shadow:0 1px 0 rgba(255,255,255,0.45)"><svg class="a" style="left:9px;top:3px" width="16" height="10" viewBox="0 0 16 10"><path d="M1 5 Q8 -2 15 5 Q8 12 1 5 Z" fill="#111"/><circle cx="8" cy="5" r="2.6" fill="#fff"/><circle cx="8" cy="5" r="1.4" fill="#111"/></svg></div><div class="a" style="left:271.8px;top:25.19999999999999px;width:35px;height:17px;border:1px solid #6b6b6b;border-radius:3px;background:linear-gradient(#fdfdfd,#e6e6e6 50%,#d4d4d4);box-shadow:0 1px 0 rgba(255,255,255,0.45)"><svg class="a" style="left:6px;top:2px" width="12" height="12" viewBox="0 0 12 12"><rect x="5.2" y="0" width="1.6" height="12" fill="#111" transform="rotate(0 6 6)"/><rect x="5.2" y="0" width="1.6" height="12" fill="#111" transform="rotate(45 6 6)"/><rect x="5.2" y="0" width="1.6" height="12" fill="#111" transform="rotate(90 6 6)"/><rect x="5.2" y="0" width="1.6" height="12" fill="#111" transform="rotate(135 6 6)"/><circle cx="6" cy="6" r="4" fill="#111"/><circle cx="6" cy="6" r="1.6" fill="#ddd"/></svg><svg class="a" style="left:23px;top:6px" width="6" height="4"><path d="M0 0.5H5.5L2.75 3.5Z" fill="#111"/></svg></div><div class="a" style="left:352.4px;top:25.400000000000006px;width:57.5px;height:16.8px;border:1px solid #6b6b6b;border-radius:8.4px;background:#fff;box-shadow:inset 0 1px 1.5px rgba(0,0,0,0.35)"><svg class="a" style="left:3px;top:2.5px" width="11" height="10" viewBox="0 0 11 10"><circle cx="4.3" cy="4.3" r="3" fill="none" stroke="#333" stroke-width="1.5"/><path d="M6.5 6.5 L9.5 9.3" stroke="#333" stroke-width="1.8"/></svg></div><svg class="a" style="left:172.5px;top:1.3000000000000114px" width="14" height="12" viewBox="0 0 14 12"><defs><linearGradient id="tf1" x1="0" y1="0" x2="0" y2="1"><stop offset="0" stop-color="#bad6ee"/><stop offset="1" stop-color="#6f9fcf"/></linearGradient></defs><path d="M0.5 2 Q0.5 1 1.5 1 L5 1 L6 2.2 L12.5 2.2 Q13.5 2.2 13.5 3.2 L13.5 10.5 Q13.5 11.3 12.7 11.3 L1.3 11.3 Q0.5 11.3 0.5 10.5 Z" fill="url(#tf1)" stroke="#5d88b5" stroke-width="0.6"/></svg><div class="t" style="left:187.3px;top:2.59px;font-size:11px;font-weight:normal;color:#111;letter-spacing:0px;">Hawkscope</div></div>
</body></html>
